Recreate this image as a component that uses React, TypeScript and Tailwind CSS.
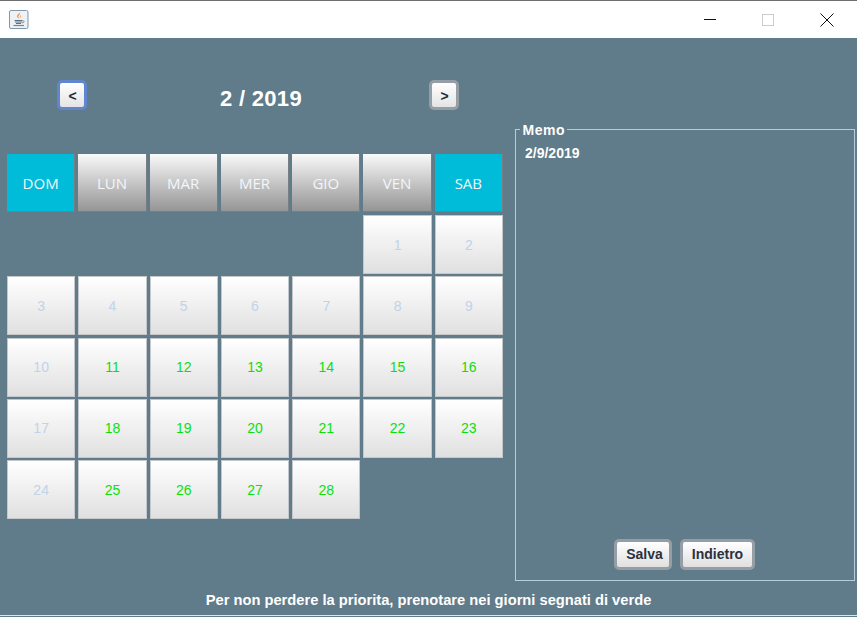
const headers = [
  { label: 'DOM', accent: true },
  { label: 'LUN', accent: false },
  { label: 'MAR', accent: false },
  { label: 'MER', accent: false },
  { label: 'GIO', accent: false },
  { label: 'VEN', accent: false },
  { label: 'SAB', accent: true },
];

const PASSED = [1, 2, 3, 4, 5, 6, 7, 8, 9, 10, 17, 24];
const LAST = 28;
const START_OFFSET = 5;

function JavaIcon() {
  return (
    <svg width="20" height="20" viewBox="0 0 20 20" className="block">
      <rect x="0.5" y="0.5" width="18.500" height="18" rx="1.500" fill="#eef2f5" stroke="#7f98ad" />
      <path d="M10.500 2.500c1.500 1.700-2.200 3-.9 5.300.3.600.9 1 .9 1-2-.8-2.800-2.300-2-3.600.6-1 2-1.500 2-2.700z" fill="#e8792b" />
      <path d="M12 5c.6 1.400-1.200 2.200-.6 3.800-1-1.200-.4-2.800.6-3.800z" fill="#ef9248" />
      <path d="M5.500 10.500h8M6 12h7M7 13.500h5" stroke="#5a7086" strokeWidth="1" fill="none" />
      <path d="M13.500 10.800c2.200-.4 2.200 1.900-.6 2.100" stroke="#5a7086" strokeWidth="0.800" fill="none" />
      <path d="M4.500 15.500h10.500" stroke="#6f869c" strokeWidth="1.200" fill="none" />
    </svg>
  );
}

function TitleBar() {
  return (
    <div className="flex h-[38px] shrink-0 items-center border-t border-[#6e6e6e] bg-white pl-[9px]">
      <JavaIcon />
      <div className="ml-auto flex items-center">
        <svg width="14" height="14" viewBox="0 0 14 14" className="mr-[46px]">
          <path d="M2 6.500h12" stroke="#111" strokeWidth="1" />
        </svg>
        <div className="mr-[45px] h-[12px] w-[12px] border border-[#cccccc]" />
        <svg width="16" height="16" viewBox="0 0 16 16" className="mr-[22px]">
          <path d="M1.500 1.500l13 13M14.500 1.500l-13 13" stroke="#111" strokeWidth="1" />
        </svg>
      </div>
    </div>
  );
}

function NavButton({ label, focused }: { label: string; focused?: boolean }) {
  return (
    <button
      className={`flex h-[30px] w-[30px] items-center justify-center rounded-[5px] border-[3px] bg-gradient-to-b from-white to-[#e4e4e4] pt-[2px] pl-[1px] font-['Liberation_Sans',sans-serif] text-[14px] font-bold text-[#222a38] ${
        focused ? 'border-[#5f86cf]' : 'border-[#969ea5]'
      }`}
    >
      {label}
    </button>
  );
}

function DayHeader({ label, accent }: { label: string; accent: boolean }) {
  return (
    <div
      className={`flex h-[58px] items-center justify-center border-r border-b border-[#777f85] pt-[2px] font-['Open_Sans',sans-serif] text-[15px] text-[#f2f6fa] ${
        accent ? 'bg-[#00bcd9]' : 'bg-gradient-to-b from-[#fafafa] to-[#959595]'
      }`}
    >
      {label}
    </div>
  );
}

function DayCell({ day }: { day: number }) {
  const passed = PASSED.includes(day);
  return (
    <div
      className={`flex h-[59px] items-center justify-center border-[1px] border-[#c4c8cb] bg-gradient-to-b from-white to-[#e0e0e0] pt-[1px] font-['Liberation_Sans',sans-serif] text-[14px] ${
        passed ? 'text-[#c1d3e8]' : 'text-[#0be00b]'
      }`}
    >
      {day}
    </div>
  );
}

function Calendar() {
  const days = Array.from({ length: LAST }, (_, i) => i + 1);
  return (
    <div className="w-[496px]">
      <div className="ml-[50px] flex h-[30px] w-[402px] items-center">
        <NavButton label="<" focused />
        <div className="flex-1 pt-[6px] pl-[6px] text-center font-['Liberation_Sans',sans-serif] text-[22px] font-bold tracking-[0.3px] text-white">2 / 2019</div>
        <NavButton label=">" />
      </div>
      <div className="mt-[44px] grid grid-cols-7 gap-x-[3px]">
        {headers.map((h) => (
          <DayHeader key={h.label} label={h.label} accent={h.accent} />
        ))}
      </div>
      <div className="mt-[3px] grid grid-cols-7 gap-x-[3px] gap-y-[2.300px]">
        {Array.from({ length: START_OFFSET }, (_, i) => (
          <div key={i} />
        ))}
        {days.map((d) => (
          <DayCell key={d} day={d} />
        ))}
      </div>
    </div>
  );
}

function Memo() {
  return (
    <fieldset className="flex h-[459px] w-[340px] flex-col border border-[#b4cde0] pr-[1px] pl-[9px] font-['Liberation_Sans',sans-serif] font-bold text-white">
      <legend className="-ml-[5px] translate-y-[1px] px-[2.500px] text-[14px] leading-[14px] tracking-[0.5px]">Memo</legend>
      <div className="mt-[9px] text-[14px] leading-[16px]">2/9/2019</div>
      <div className="mt-auto mb-[10px] ml-[89px] flex gap-[8px]">
        <button className="h-[31px] w-[58px] rounded-[5px] border-[3px] border-[#969ea5] bg-gradient-to-b from-white to-[#e0e0e0] pl-[3px] text-[14px] font-bold text-[#2b3140]">
          Salva
        </button>
        <button className="h-[31px] w-[75px] rounded-[5px] border-[3px] border-[#969ea5] bg-gradient-to-b from-white to-[#e0e0e0] text-[14px] font-bold text-[#2b3140]">
          Indietro
        </button>
      </div>
    </fieldset>
  );
}

export default function App() {
  return (
    <div className="flex h-[617px] w-[857px] flex-col overflow-hidden bg-[#607b89]">
      <TitleBar />
      <div className="flex flex-1 pl-[7px]">
        <div className="pt-[42px]">
          <Calendar />
        </div>
        <div className="ml-[12px] pt-[84px]">
          <Memo />
        </div>
      </div>
      <div className="mb-[1px] h-[33px] border-b border-[#dfe5e8] pt-[9px] text-center font-['Liberation_Sans',sans-serif] text-[14.700px] leading-[16px] font-bold text-white">
        Per non perdere la priorita, prenotare nei giorni segnati di verde
      </div>
    </div>
  );
}
